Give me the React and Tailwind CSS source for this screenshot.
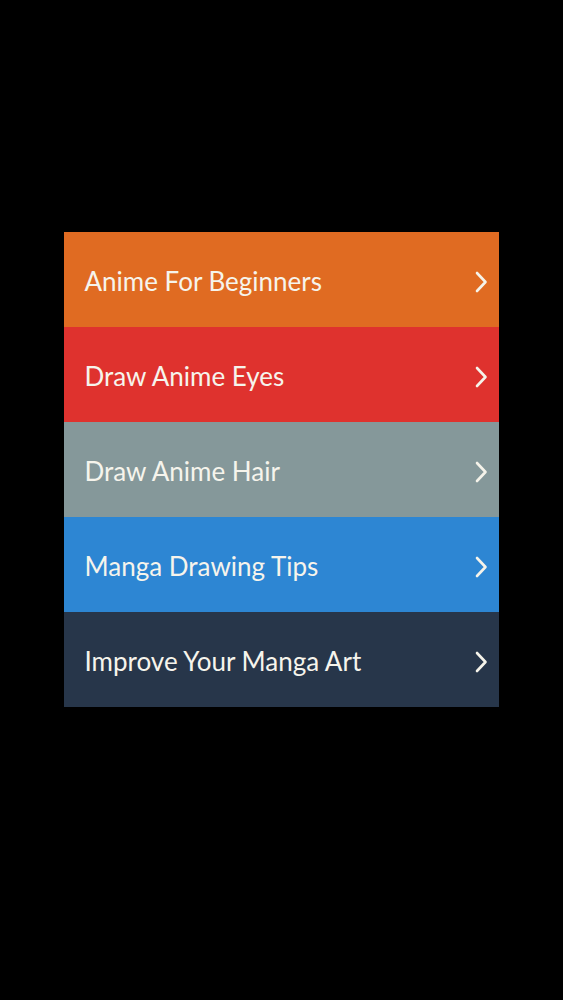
const items = [
  { label: "Anime For Beginners", bg: "bg-[#e06b22]" },
  { label: "Draw Anime Eyes", bg: "bg-[#df322e]" },
  { label: "Draw Anime Hair", bg: "bg-[#85989a]" },
  { label: "Manga Drawing Tips", bg: "bg-[#2d86d3]" },
  { label: "Improve Your Manga Art", bg: "bg-[#27364a]" },
];

function Chevron() {
  return (
    <svg width="14" height="22" viewBox="0 0 14 22" fill="none" className="mt-[2px]">
      <path d="M3 2 L11.5 11 L3 20" stroke="#f5f3ea" strokeWidth="2.6" strokeLinecap="round" strokeLinejoin="round" />
    </svg>
  );
}

export default function App() {
  return (
    <div className="min-h-[1000px] w-full bg-black flex flex-col items-center pt-[232px]" style={{ fontFamily: "Lato, 'Noto Sans', sans-serif" }}>
      <div className="w-[435px] ml-[-1px] flex flex-col">
        {items.map((it) => (
          <div key={it.label} className={`${it.bg} h-[95px] flex items-center justify-between pl-[21px] pr-[11px] pt-[3px]`}>
            <span className="text-[26px] text-[#f6f4ec]">{it.label}</span>
            <Chevron />
          </div>
        ))}
      </div>
    </div>
  );
}
